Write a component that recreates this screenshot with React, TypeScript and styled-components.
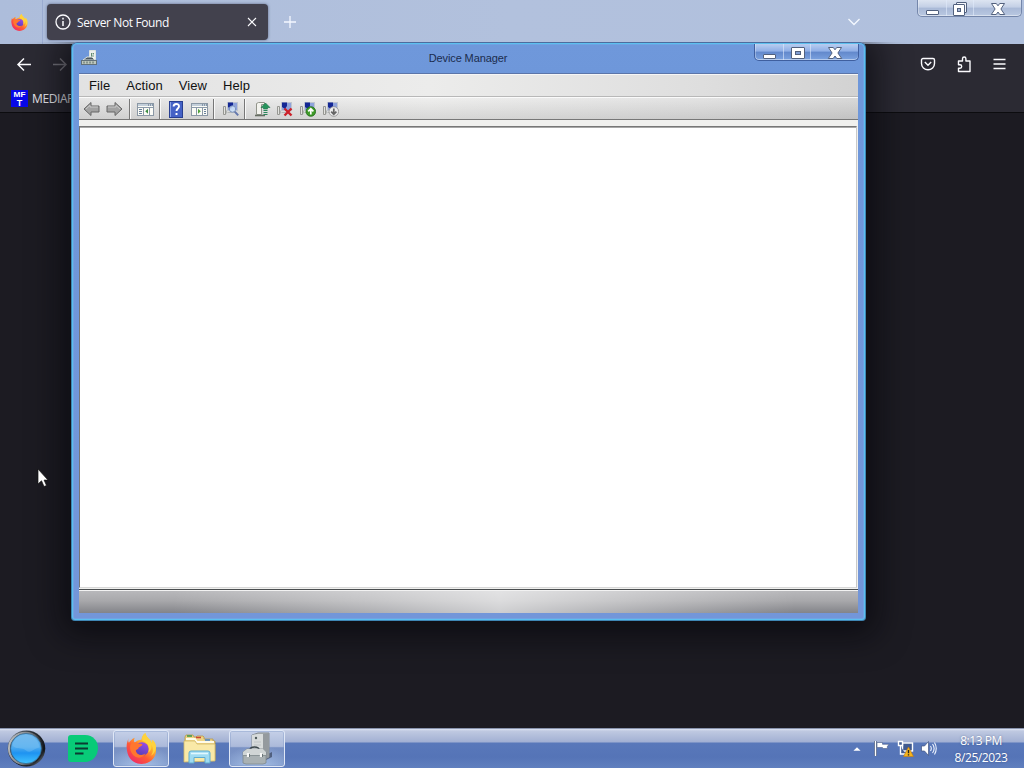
import React from 'react';
import styled, { createGlobalStyle, css } from 'styled-components';

const GlobalStyle = createGlobalStyle`
  *,
  *::before,
  *::after {
    box-sizing: border-box;
  }

  body {
    margin: 0;
    overflow: hidden;
    background: #1c1b22;
  }

  svg {
    display: block;
    flex: none;
  }
`;

const Desktop = styled.div`
  position: relative;
  display: flex;
  flex-direction: column;
  width: 1024px;
  height: 768px;
  overflow: hidden;
  font-family: 'Open Sans', 'Noto Sans', sans-serif;
  font-size: 12px;
  cursor: default;
`;

/* Browser */

const Browser = styled.main`
  flex: 1;
  display: flex;
  flex-direction: column;
  background: #1c1b22;
`;

const TabStrip = styled.div`
  display: flex;
  height: 44px;
  background: linear-gradient(90deg, #adbddb, #b2c1dd 50%, #b0c0dd);
`;

const PinnedTab = styled.div`
  display: flex;
  align-items: center;
  width: 43px;
  padding-left: 11px;
  border-right: 1px solid #9aabd0;
`;

const Tab = styled.div`
  display: flex;
  align-items: center;
  width: 221px;
  height: 36px;
  margin: 4px 0 0 4px;
  padding: 0 10px 0 8px;
  border-radius: 4px;
  background: #42414d;
  box-shadow: 0 0 3px rgba(40, 45, 75, 0.6);
  color: #fbfbfe;
`;

const TabTitle = styled.span`
  flex: 1;
  margin-left: 6px;
  letter-spacing: -0.38px;
  white-space: nowrap;
`;

const NewTab = styled.div`
  display: flex;
  align-items: center;
  margin-left: 15px;
`;

const TabStripEnd = styled.div`
  display: flex;
  align-items: flex-start;
  margin-left: auto;
  padding-right: 2px;
`;

const ListTabs = styled.div`
  display: flex;
  align-items: center;
  height: 44px;
  margin-right: 56px;
`;

const NavBar = styled.div`
  display: flex;
  align-items: center;
  height: 40px;
  padding: 0 17px 0 16px;
  background: #2b2a33;
`;

const NavGroup = styled.div<{ $end?: boolean }>`
  display: flex;
  align-items: center;
  gap: 20px;
  margin-left: ${({ $end }) => ($end ? 'auto' : '0')};
`;

const BookmarkBar = styled.div`
  display: flex;
  align-items: center;
  height: 29px;
  padding-left: 11px;
  border-bottom: 1px solid #0c0c0f;
  background: #2b2a33;
  color: #e6e6ec;
`;

const BookmarkLabel = styled.span`
  margin-left: 4px;
  letter-spacing: -0.4px;
`;

/* Caption buttons shared by both windows */

const Caption = styled.div<{ $dark?: boolean }>`
  display: flex;
  width: 105px;
  height: 17px;
  border: 1px solid ${({ $dark }) => ($dark ? '#3f5f9f' : '#7486aa')};
  border-top: 0;
  border-radius: 0 0 5px 5px;
  overflow: hidden;
  background: ${({ $dark }) =>
    $dark
      ? 'linear-gradient(#b9cdf0 0, #8eaee6 45%, #6288cb 50%, #7ba2df 100%)'
      : 'linear-gradient(#dce4f1 0, #c3cfe5 45%, #a9b9d7 50%, #b9c8e1 100%)'};
  box-shadow: inset 0 -1px 0 rgba(255, 255, 255, 0.45), inset 1px 0 0 rgba(255, 255, 255, 0.3);
`;

const CaptionButton = styled.div<{ $w: number }>`
  display: flex;
  justify-content: center;
  width: ${({ $w }) => $w}px;

  & + & {
    border-left: 1px solid rgba(225, 235, 252, 0.6);
  }
`;

/* Device manager window */

const Window = styled.section`
  position: absolute;
  left: 71px;
  top: 42px;
  display: flex;
  flex-direction: column;
  width: 795px;
  height: 579px;
  padding: 0 7px 7px;
  border: 1px solid #3f86b4;
  border-top-color: #4d6c9e;
  border-radius: 6px 6px 4px 4px;
  background: linear-gradient(#6f98db, #6e97da 32px, #7396d9);
  box-shadow:
    inset 0 0 0 1px #5cc0ee,
    inset 0 0 0 2px rgba(112, 170, 232, 0.6),
    0 4px 32px 10px rgba(5, 5, 9, 0.62);
  clip-path: inset(0 -60px -60px -60px);
  font-family: 'Liberation Sans', Arial, sans-serif;
`;

const TitleBar = styled.header`
  display: grid;
  grid-template-columns: 105px 1fr 105px;
  height: 30px;
  margin-right: -1px;
  padding-top: 1px;
`;

const TitleIcon = styled.div`
  padding: 6px 0 0 2px;
`;

const Title = styled.div`
  padding: 8px 2px 0 0;
  color: #1b2c4d;
  font-size: 11px;
  line-height: 13px;
  letter-spacing: -0.12px;
  text-align: center;
`;

const Client = styled.div`
  flex: 1;
  display: flex;
  flex-direction: column;
  border-top: 1px solid #5b75a9;
  background: #f0f0ee;
`;

const barFill = 'linear-gradient(90deg, #e2e2e2, #ececeb 45%, #dedede 80%, #d2d2d2)';

const MenuBar = styled.nav`
  display: flex;
  align-items: center;
  gap: 16px;
  height: 23px;
  padding: 1px 0 0 10px;
  border-bottom: 1px solid #b8b8b8;
  background: ${barFill};
  box-shadow: inset 0 1px 0 #f6f6f6;
  color: #111;
  font-size: 13px;
  letter-spacing: 0.07px;
`;

const ToolBar = styled.div`
  display: flex;
  align-items: center;
  height: 23px;
  padding: 1px 0 0 4px;
  border-top: 1px solid #fafafa;
  border-bottom: 1px solid #777;
  background: linear-gradient(rgba(255, 255, 255, 0.15), rgba(120, 120, 120, 0.18)), ${barFill};
`;

const Tool = styled.div<{ $gap?: number }>`
  margin-left: ${({ $gap = 0 }) => $gap}px;
`;

const Divider = styled.div<{ $gap?: number }>`
  width: 2px;
  height: 20px;
  margin-left: ${({ $gap = 0 }) => $gap}px;
  border-left: 1px solid #777;
  border-right: 1px solid #f8f8f8;
`;

const Pane = styled.div`
  flex: 1;
  margin: 6px 1px 1px 0;
  border: 1px solid #777;
  border-right-color: #c9c9c9;
  border-bottom-color: #d8d8d8;
  background: #fff;
  box-shadow: inset 0 1px 0 #a8a8a8;
`;

const StatusBar = styled.footer`
  height: 24px;
  border-top: 1px solid #4b4e50;
  background:
    linear-gradient(#f2f2f2, #f2f2f2) top / 100% 1px no-repeat,
    linear-gradient(
      90deg,
      rgba(255, 255, 255, 0) 12%,
      rgba(255, 255, 255, 0.35) 38%,
      rgba(255, 255, 255, 0.6) 54%,
      rgba(255, 255, 255, 0.3) 72%,
      rgba(255, 255, 255, 0) 92%
    ),
    linear-gradient(#b9b9bc 0, #a9a9ac 45%, #838489 100%);
`;

/* Taskbar */

const TaskBar = styled.footer`
  display: flex;
  height: 40px;
  border-top: 1px solid #8994ae;
  background: linear-gradient(#dce4f3 0, #bfc9e1 2px, #a2b0d3 13px, #5978ba 14px, #5574b7 28px, #607fbe 100%);
  color: #fff;
`;

const TaskSlot = styled.div<{ $w: number; $active?: boolean }>`
  display: flex;
  align-items: center;
  justify-content: center;
  width: ${({ $w }) => $w}px;
  height: 37px;
  margin-top: 1px;
  ${({ $active }) =>
    $active &&
    css`
      border: 1px solid #dfe7f6;
      border-radius: 3px;
      box-shadow: inset 0 0 0 1px rgba(120, 145, 195, 0.35);
      background:
        radial-gradient(ellipse 65% 70% at 50% 110%, rgba(190, 215, 245, 0.7), transparent),
        linear-gradient(#c5d0e8, #acbada 44%, #7890c3 48%, #7f99cb);
    `}
`;

const TaskGap = styled.div<{ $w: number }>`
  width: ${({ $w }) => $w}px;
`;

const Tray = styled.div`
  display: flex;
  align-items: center;
  height: 39px;
  margin-left: auto;
`;

const TrayIcons = styled.div`
  display: flex;
  align-items: center;
  gap: 7px;
  margin-right: 17px;
`;

const TrayArrow = styled.div`
  margin-right: 5px;
`;

const Clock = styled.div`
  width: 54px;
  margin-right: 16px;
  line-height: 17px;
  letter-spacing: -0.45px;
  text-align: center;
  text-shadow: 0 0 2px rgba(30, 50, 100, 0.5);
  white-space: nowrap;
`;

const Pointer = styled.div`
  position: absolute;
  left: 37px;
  top: 468px;
`;

const FirefoxIcon: React.FC<{ size: number; id: string }> = ({ size, id }) => (
  <svg width={size} height={size} viewBox="0 0 32 32">
    <defs>
      <linearGradient id={`${id}-fire`} x1="0.9" y1="0.05" x2="0.2" y2="0.95">
        <stop offset="0" stopColor="#fff04a" />
        <stop offset="0.35" stopColor="#ffb02c" />
        <stop offset="0.65" stopColor="#ff5a35" />
        <stop offset="1" stopColor="#ee2c68" />
      </linearGradient>
      <linearGradient id={`${id}-globe`} x1="0.7" y1="0" x2="0.3" y2="1">
        <stop offset="0" stopColor="#9a4be6" />
        <stop offset="1" stopColor="#563fb7" />
      </linearGradient>
    </defs>
    <path
      d="M20 0c-3 2-4 5-4 7-3 0-5 1-7 3-1-1-1-3 0-5-3 1-5 4-6 5-1-1-1-3 0-5C1 9 0 13 1 18c1 8 7 14 15 14s15-6 15-14c0-5-2-9-5-11 1 2 1 3 1 4-1-4-6-6-7-11z"
      fill={`url(#${id}-fire)`}
    />
    <circle cx="16.5" cy="16.5" r="7" fill={`url(#${id}-globe)`} />
    <path
      d="M20 0c-3 2-4 5-3 8 5 2 8 6 6 12 3-2 4-5 3-8 3 4 2 9-1 12 4-2 6-6 6-10 0-3-2-6-4-7v4c-1-4-6-6-7-11z"
      fill="#ffd23c"
    />
    <path d="M5 11c3-2 6-2 8 0 2 0 4 0 4 1s-3 2-4 3c0 2-2 2-3 3 1 5 7 6 10 3-1 4-7 6-11 3-4-3-6-8-4-13z" fill="#ff762f" />
  </svg>
);

const CaptionButtons: React.FC<{ dark?: boolean; restore?: boolean }> = ({ dark, restore }) => (
  <Caption $dark={dark}>
    <CaptionButton $w={28}>
      <svg width="16" height="17" viewBox="0 0 16 17">
        <rect x="2.5" y="10.5" width="12" height="4" rx="0.5" fill="#fff" stroke="#52617e" />
      </svg>
    </CaptionButton>
    <CaptionButton $w={27}>
      <svg width="16" height="17" viewBox="0 0 16 17">
        {restore ? (
          <>
            <rect x="4.5" y="2.5" width="10" height="10" rx="0.5" fill="#f4f6fb" stroke="#52617e" />
            <rect x="1.5" y="4.5" width="11" height="11" rx="0.5" fill="#fff" stroke="#52617e" />
            <rect x="5.5" y="8.5" width="3" height="3" fill="#a9b9d7" stroke="#52617e" />
          </>
        ) : (
          <>
            <rect x="2.5" y="3.5" width="13" height="11" rx="0.5" fill="#fff" stroke="#52617e" />
            <rect x="6.5" y="7.5" width="5" height="3" fill="#7f9dd2" stroke="#52617e" />
          </>
        )}
      </svg>
    </CaptionButton>
    <CaptionButton $w={48}>
      <svg width="16" height="17" viewBox="0 0 16 17">
        <path
          d="M1.5 3.5h4.8L8 5.8l1.7-2.3h4.8L10.9 9l3.8 5.5H9.8L8 12l-1.8 2.5H1.3L5.1 9z"
          fill="#fff"
          stroke="#52617e"
          strokeLinejoin="round"
        />
      </svg>
    </CaptionButton>
  </Caption>
);

const Arrow: React.FC<{ flip?: boolean }> = ({ flip }) => (
  <svg width="17" height="16" viewBox="0 0 17 16">
    <g transform={flip ? 'translate(17 0) scale(-1 1)' : undefined}>
      <path d="M1 8l7-6.5V5h8v6H8v3.5z" fill="#a2a2a2" stroke="#666" strokeLinejoin="round" />
      <path d="M3 8l4-3.7V6h8" fill="none" stroke="#c9c9c9" />
    </g>
  </svg>
);

const PanelIcon: React.FC<{ right?: boolean }> = ({ right }) => (
  <svg width="17" height="16" viewBox="0 0 17 16">
    <rect x="0.5" y="2.5" width="16" height="12" fill="#fbfbf6" stroke="#8b98a5" />
    <path d="M1 4h15" stroke="#c3cfda" strokeWidth="2" />
    <path d="M11 4h1m1 0h1m1 0h1" stroke="#4a607a" />
    <path d="M1 6.5h15" stroke="#8b9aaa" />
    {right ? (
      <>
        <path d="M11.5 7v7M5.500 7v7" stroke="#8b98a5" />
        <path d="M13 8.500h2m-2 2h2m-2 2h2" stroke="#68809a" />
        <path d="M7 7.800v5l2.800-2.500z" fill="#52a33c" />
      </>
    ) : (
      <>
        <path d="M6.5 7v7M12.5 7v7" stroke="#8b98a5" />
        <path d="M2 8.500h3m-3 2h3m-3 2h3" stroke="#68809a" />
        <path d="M11 7.800v5l-2.800-2.500z" fill="#3d8d43" />
      </>
    )}
  </svg>
);

const HelpIcon: React.FC = () => (
  <svg width="14" height="17" viewBox="0 0 14 17">
    <rect x="0.5" y="0.5" width="13" height="16" fill="#4562c6" stroke="#283f91" />
    <path d="M1.5 1v15" stroke="#8ba2e4" />
    <path d="M4.6 5.6c0-3.6 5.4-3.4 5.4-.3 0 2.2-2.5 2.2-2.5 4.7M7.5 12v2" fill="none" stroke="#fff" strokeWidth="1.9" />
  </svg>
);

const Computer: React.FC = () => (
  <g>
    <path d="M0.5 5.5h2v8h-2z" fill="#e3e3e0" stroke="#969792" />
    <rect x="4.5" y="1.5" width="10" height="8" fill="#8fa3dc" stroke="#c0c6cf" />
    <path d="M5 1.500h5v3.500l-2 3-3-2z" fill="#142794" />
    <path d="M4.5 11.5h8M3.5 9.5v3" stroke="#b3b7b6" />
  </g>
);

const ScanIcon: React.FC = () => (
  <svg width="16" height="16" viewBox="0 0 16 16">
    <Computer />
    <circle cx="9.5" cy="8" r="3.2" fill="#cfe4fa" fillOpacity="0.85" stroke="#7e94bd" />
    <path d="M11.8 10.6l3.4 3.8" stroke="#6478ad" strokeWidth="2" />
  </svg>
);

const UpdateIcon: React.FC = () => (
  <svg width="17" height="16" viewBox="0 0 17 16">
    <path d="M2.5 2.500l2-1h6v2h-3v10h-5z" fill="#f3f3ee" stroke="#92958b" />
    <path d="M1 14.5h10" stroke="#666d62" strokeWidth="1.6" />
    <path d="M11.500 2l4.500 4.500h-2.500V8h-4V6.500H7z" fill="#26945b" stroke="#19734a" strokeWidth="0.6" />
    <path d="M9.500 9.500h4m-4 2h4m-4 2h4" stroke="#29865a" strokeWidth="1.2" />
  </svg>
);

const BadgeIcon: React.FC<{ kind: 'remove' | 'enable' | 'disable' }> = ({ kind }) => (
  <svg width="16" height="16" viewBox="0 0 16 16">
    <Computer />
    {kind === 'remove' ? (
      <path d="M7.5 7.5l7 7m0-7l-7 7" stroke="#cb2029" strokeWidth="2.4" />
    ) : (
      <>
        <circle
          cx="10.8"
          cy="10.5"
          r="4.8"
          fill={kind === 'enable' ? '#3f9a28' : '#ececec'}
          stroke={kind === 'enable' ? '#1e6a17' : '#8e8e8e'}
          strokeWidth="0.8"
        />
        <path
          d={kind === 'enable' ? 'M10.8 13.5V8M8.2 10.4l2.6-2.6 2.6 2.6' : 'M10.8 7.5V13M8.2 10.6l2.6 2.6 2.6-2.6'}
          fill="none"
          stroke={kind === 'enable' ? '#fff' : '#666'}
          strokeWidth="1.7"
        />
      </>
    )}
  </svg>
);

const DeviceIcon: React.FC = () => (
  <svg width="17" height="16" viewBox="0 0 17 16">
    <path d="M8.5 0.5h6v9h-6z" fill="#edf0ed" stroke="#dce3df" />
    <path d="M10 3h3v4h-3z" fill="#638b73" />
    <path d="M11 4h1v4" stroke="#fff" fill="none" />
    <path d="M2 10l4-3h5l3 3H2z" fill="#4c585f" stroke="#dbe2df" />
    <rect x="0.5" y="10.5" width="15" height="4" fill="#bdc7bd" stroke="#63717a" />
    <path d="M3 11.5v2m3-2v2m3-2v2m3-2v2" stroke="#51615c" />
  </svg>
);

const StartOrb: React.FC = () => (
  <svg width="40" height="37" viewBox="0 0 40 38">
    <defs>
      <linearGradient id="orb-rim" x1="0" y1="0" x2="1" y2="1">
        <stop offset="0" stopColor="#77828e" />
        <stop offset="0.35" stopColor="#2c3137" />
        <stop offset="0.75" stopColor="#101419" />
        <stop offset="1" stopColor="#a2abb4" />
      </linearGradient>
      <linearGradient id="orb-ring" x1="0" y1="0" x2="1" y2="0.3">
        <stop offset="0" stopColor="#c3c6c8" />
        <stop offset="0.6" stopColor="#777e85" />
        <stop offset="1" stopColor="#22272d" />
      </linearGradient>
      <linearGradient id="orb-core" x1="0" y1="0" x2="0" y2="1">
        <stop offset="0" stopColor="#68b3ea" />
        <stop offset="0.45" stopColor="#50abee" />
        <stop offset="0.65" stopColor="#1e93f1" />
        <stop offset="1" stopColor="#42c4ff" />
      </linearGradient>
    </defs>
    <ellipse cx="20.5" cy="19" rx="19.3" ry="18.5" fill="url(#orb-rim)" />
    <ellipse cx="19.5" cy="19" rx="17" ry="16.3" fill="none" stroke="url(#orb-ring)" strokeWidth="2" />
    <ellipse cx="20" cy="19" rx="15.8" ry="15.5" fill="url(#orb-core)" stroke="#3a6d93" strokeWidth="0.7" />
    <path d="M6 16c5 5 9 1 14 5s9-3 14-3c-1-8-7-13-14-13S7 9 6 16z" fill="#9dd3f7" fillOpacity="0.28" />
  </svg>
);

const NotesIcon: React.FC = () => (
  <svg width="30" height="27" viewBox="0 0 30 27">
    <path d="M3 0h14c8 0 13 6 13 13s-5 14-13 14H3a3 3 0 0 1-3-3V3a3 3 0 0 1 3-3z" fill="#08cb78" />
    <path d="M7 8.5h13M7 13.5h13M7 18.5h8.5" stroke="#0b3b32" strokeWidth="2" />
  </svg>
);

const ExplorerIcon: React.FC = () => (
  <svg width="33" height="30" viewBox="0 0 33 30">
    <path d="M2 3l1-2h7l1 2h2l1-1h6l1 1v2h9v2h2v19H2z" fill="#eed486" stroke="#b79948" strokeWidth="0.8" />
    <path d="M4 2h5" stroke="#37964a" strokeWidth="1.5" />
    <path d="M13 3.5h5" stroke="#cc4334" strokeWidth="1.5" />
    <path d="M22 6h5" stroke="#4484ce" strokeWidth="1.5" />
    <path d="M3 5h9l2 3h17" fill="none" stroke="#fffbe8" strokeWidth="1.8" />
    <path d="M1 7h11l2 3h18v17l-31 1z" fill="#f9e9a7" stroke="#d2b968" strokeWidth="0.8" />
    <path d="M6 29V19q0-2 2-2h17q2 0 2 2v10h-5v-5.5H11V29z" fill="#9fdbf1" stroke="#5facd0" />
    <path d="M8 19.5h17" stroke="#e1f8ff" strokeWidth="1.6" />
  </svg>
);

const HardwareIcon: React.FC = () => (
  <svg width="31" height="33" viewBox="0 0 31 33">
    <path d="M22 24l8-4v5l-8 4z" fill="#2b3447" fillOpacity="0.6" />
    <path d="M10 3l6-2h11v24l-6 3H10z" fill="#b9bebf" stroke="#858d92" />
    <path d="M10 3l6-1h5v26H10z" fill="#d7dbdb" />
    <path d="M21 2l6-1v24l-6 3z" fill="#949a9e" />
    <circle cx="14" cy="6" r="1.2" fill="#4e5a5c" />
    <path d="M12 10h7m-7 3h7" stroke="#bfc4c5" />
    <path d="M8 18c0-4 9-4 9 0" fill="none" stroke="#3b474b" strokeWidth="1.5" />
    <path d="M1 20l4-3h16l3 3v11l-3 1H4l-3-1z" fill="#a9b1b3" stroke="#7f898d" strokeWidth="0.8" />
    <path d="M1 20l4-3h16l3 3v3H1z" fill="#d0d5d5" />
    <path d="M1 23.5h23" stroke="#8a9496" />
    <path d="M6 21v4m13-4v4" stroke="#f8f8f8" strokeWidth="2.2" />
    <path d="M7.5 22v3m13-3v3" stroke="#6a7578" />
  </svg>
);

const App: React.FC = () => {
  return (
    <>
      <GlobalStyle />
      <Desktop>
        <Browser>
          <TabStrip>
            <PinnedTab>
              <FirefoxIcon size={17} id="ff-small" />
            </PinnedTab>
            <Tab>
              <svg width="16" height="16" viewBox="0 0 16 16" fill="none" stroke="#fbfbfe">
                <circle cx="8" cy="8" r="7" strokeWidth="1.3" />
                <path d="M8 3.8v1.7M8 7v5" strokeWidth="1.5" />
              </svg>
              <TabTitle>Server Not Found</TabTitle>
              <svg width="12" height="12" viewBox="0 0 12 12" stroke="#fbfbfe" strokeWidth="1.1">
                <path d="M2 2l8 8m0-8l-8 8" />
              </svg>
            </Tab>
            <NewTab>
              <svg width="14" height="14" viewBox="0 0 14 14" stroke="#f4f8ff" strokeWidth="1.3">
                <path d="M7 1v12M1 7h12" />
              </svg>
            </NewTab>
            <TabStripEnd>
              <ListTabs>
                <svg width="14" height="10" viewBox="0 0 14 10" fill="none" stroke="#f4f8ff" strokeWidth="1.3">
                  <path d="M1.5 2L7 7.5 12.5 2" />
                </svg>
              </ListTabs>
              <CaptionButtons restore />
            </TabStripEnd>
          </TabStrip>
          <NavBar>
            <NavGroup>
              <svg width="16" height="16" viewBox="0 0 16 16" fill="none" stroke="#fbfbfe" strokeWidth="1.5">
                <path d="M15 8.5H2M8 2.5l-6 6 6 6" />
              </svg>
              <svg width="16" height="16" viewBox="0 0 16 16" fill="none" stroke="#74737b" strokeWidth="1.5">
                <path d="M1 8.5h13M8 2.5l6 6-6 6" />
              </svg>
            </NavGroup>
            <NavGroup $end>
              <svg width="16" height="16" viewBox="0 0 16 16" fill="none" stroke="#fbfbfe" strokeWidth="1.4">
                <path d="M3 2.5h10A1.5 1.5 0 0 1 14.5 4v3.5a6.5 6.3 0 0 1-13 0V4A1.5 1.5 0 0 1 3 2.5z" />
                <path d="M4.8 6L8 9.2 11.2 6" />
              </svg>
              <svg width="16" height="17" viewBox="0 0 16 17" fill="none" stroke="#fbfbfe" strokeWidth="1.4">
                <path
                  d="M2.500 5h4V2.700a1.700 1.700 0 0 1 3.400 0V5H14v10.500H2.500v-3.300H4a1.700 1.700 0 0 0 0-3.400H2.500z"
                  strokeLinejoin="round"
                />
              </svg>
              <svg width="15" height="16" viewBox="0 0 15 16" stroke="#fbfbfe" strokeWidth="1.3">
                <path d="M1.5 3.5h12M1.5 8h12M1.5 12.5h12" />
              </svg>
            </NavGroup>
          </NavBar>
          <BookmarkBar>
            <svg width="17" height="17" viewBox="0 0 17 17">
              <rect width="17" height="17" fill="#0808e8" />
              <g fill="#fff" fontFamily="Liberation Sans, sans-serif" fontWeight="bold" textAnchor="middle">
                <text x="8.5" y="7.3" fontSize="8" textLength="12" lengthAdjust="spacingAndGlyphs">
                  MF
                </text>
                <text x="8.5" y="15.5" fontSize="9">
                  T
                </text>
              </g>
            </svg>
            <BookmarkLabel>MEDIAFIRE</BookmarkLabel>
          </BookmarkBar>
        </Browser>

        <TaskBar>
          <TaskGap $w={6} />
          <TaskSlot $w={40}>
            <StartOrb />
          </TaskSlot>
          <TaskGap $w={9} />
          <TaskSlot $w={56}>
            <NotesIcon />
          </TaskSlot>
          <TaskGap $w={2} />
          <TaskSlot $w={56} $active>
            <FirefoxIcon size={31} id="ff-large" />
          </TaskSlot>
          <TaskGap $w={2} />
          <TaskSlot $w={56}>
            <ExplorerIcon />
          </TaskSlot>
          <TaskGap $w={2} />
          <TaskSlot $w={56} $active>
            <HardwareIcon />
          </TaskSlot>
          <Tray>
            <TrayIcons>
              <TrayArrow>
                <svg width="8" height="6" viewBox="0 0 9 6">
                  <path d="M0.5 5L4.5 1l4 4z" fill="#fff" />
                </svg>
              </TrayArrow>
              <svg width="17" height="17" viewBox="0 0 17 17">
                <path d="M2.5 1v15" stroke="#33476f" strokeWidth="3" />
                <path d="M2.5 1v15" stroke="#fff" strokeWidth="1.6" />
                <path
                  d="M4 2.5h5.5v1.8H16l-2 2.700 1 1.500H9.500V7.500H4z"
                  fill="#fff"
                  stroke="#4b5e88"
                  strokeWidth="0.6"
                />
              </svg>
              <svg width="17" height="17" viewBox="0 0 17 17">
                <rect x="5.5" y="3" width="10" height="8" fill="#405a90" stroke="#fff" strokeWidth="1.4" />
                <path d="M1.5 1.5h4v4h-4zM3.5 6v8h5" fill="#405a90" stroke="#fff" strokeWidth="1.4" />
                <path d="M11.5 7l5 9.5h-10z" fill="#f7b51c" stroke="#bf7b12" strokeWidth="0.6" />
                <path d="M11.5 10v3.2m0 1v1.2" stroke="#27241c" strokeWidth="1.4" />
              </svg>
              <svg width="16" height="17" viewBox="0 0 16 17">
                <path d="M0.5 6h3l4-4.5v14l-4-4.5h-3z" fill="#fff" stroke="#42547f" strokeWidth="0.7" />
                <path
                  d="M9.5 6q1.6 2.5 0 5M11.5 4q3.3 4.5 0 9M13.5 2.5q3.5 6 0 12"
                  fill="none"
                  stroke="#edf3ff"
                  strokeWidth="1.1"
                />
              </svg>
            </TrayIcons>
            <Clock>
              <div>8:13 PM</div>
              <div>8/25/2023</div>
            </Clock>
          </Tray>
        </TaskBar>

        <Window>
          <TitleBar>
            <TitleIcon>
              <DeviceIcon />
            </TitleIcon>
            <Title>Device Manager</Title>
            <CaptionButtons dark />
          </TitleBar>
          <Client>
            <MenuBar>
              <span>File</span>
              <span>Action</span>
              <span>View</span>
              <span>Help</span>
            </MenuBar>
            <ToolBar>
              <Tool>
                <Arrow />
              </Tool>
              <Tool $gap={6}>
                <Arrow flip />
              </Tool>
              <Divider $gap={6} />
              <Tool $gap={6}>
                <PanelIcon />
              </Tool>
              <Divider $gap={5} />
              <Tool $gap={8}>
                <HelpIcon />
              </Tool>
              <Tool $gap={8}>
                <PanelIcon right />
              </Tool>
              <Divider $gap={5} />
              <Tool $gap={8}>
                <ScanIcon />
              </Tool>
              <Divider $gap={5} />
              <Tool $gap={8}>
                <UpdateIcon />
              </Tool>
              <Tool $gap={6}>
                <BadgeIcon kind="remove" />
              </Tool>
              <Tool $gap={7}>
                <BadgeIcon kind="enable" />
              </Tool>
              <Tool $gap={7}>
                <BadgeIcon kind="disable" />
              </Tool>
            </ToolBar>
            <Pane />
            <StatusBar />
          </Client>
        </Window>

        <Pointer>
          <svg width="12" height="20" viewBox="0 0 12 20">
            <path d="M1 1v15l3.5-3.2L7 18.5l2.5-1-2.4-5.4H11z" fill="#fff" stroke="#111" strokeWidth="0.7" />
          </svg>
        </Pointer>
      </Desktop>
    </>
  );
};

export default App;
